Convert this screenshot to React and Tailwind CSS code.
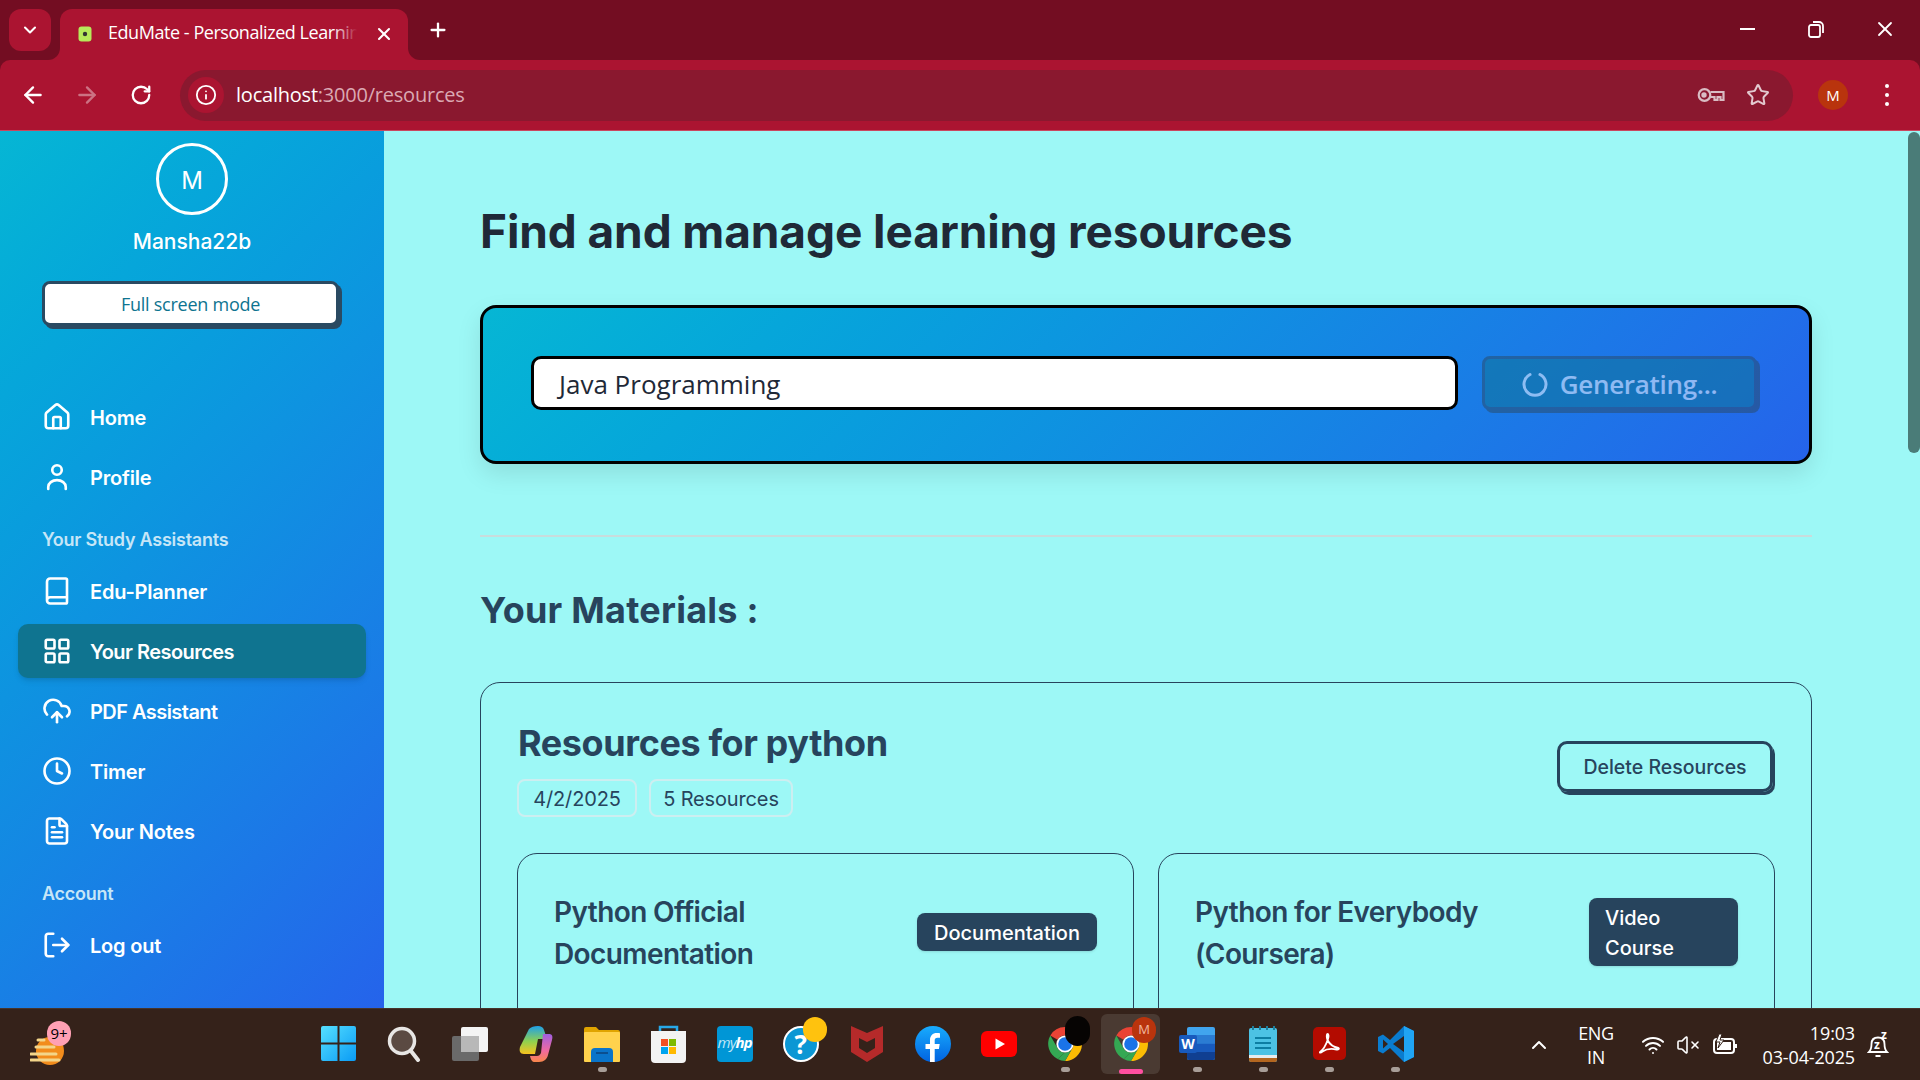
import React from 'react';
import { ChevronDown, X, Plus, ArrowLeft, ArrowRight, RotateCw, Info, Star, House, Book, LayoutGrid, CloudUpload, Clock, FileText, LogOut, ChevronUp, Wifi, VolumeX } from 'lucide-react';

function ProfileIcon({ size, strokeWidth, className }) {
  return (
    <svg width={size} height={size} viewBox="0 0 24 24" fill="none" stroke="currentColor" strokeWidth={strokeWidth} strokeLinecap="round" strokeLinejoin="round" className={className}>
      <circle cx="12" cy="6.400" r="3.800" />
      <path d="M5 21.500V20a7 5.500 0 0 1 14 0v1.500" />
    </svg>
  );
}

function Chrome() {
  return (
    <div className="flex h-[60px] items-end bg-[#730d22] pl-[9px] text-white">
      <div className="mb-[9px] flex h-[42px] w-[42px] items-center justify-center rounded-xl bg-[#ab1431]"><ChevronDown size={20} strokeWidth={2.5} /></div>
      <div className="relative ml-[9px] flex h-[51px] w-[348px] items-center rounded-t-xl bg-[#ab1431] pl-[18px]">
        <div className="absolute bottom-0 right-full h-3 w-3 bg-[#ab1431]"><div className="h-full w-full rounded-br-xl bg-[#730d22]" /></div>
        <div className="absolute bottom-0 left-full h-3 w-3 bg-[#ab1431]"><div className="h-full w-full rounded-bl-xl bg-[#730d22]" /></div>
        <svg width="14" height="16" viewBox="0 0 14 16" className="mb-[1px] shrink-0"><rect x="0.5" y="0.5" width="13" height="15" rx="3" fill="#b6ea5a" /><circle cx="7" cy="8" r="2.200" fill="#333" /></svg>
        <div className="relative mb-[5px] ml-[16px] w-[249px] overflow-hidden whitespace-nowrap font-['Open_Sans',sans-serif] text-[18px] tracking-[-0.45px]">EduMate - Personalized Learning
          <div className="absolute inset-y-0 right-0 w-6 bg-linear-to-r from-transparent to-[#ab1431]" />
        </div>
        <X size={20} strokeWidth={2.5} className="mb-[1px] ml-[17px]" />
      </div>
      <Plus size={22} strokeWidth={2.5} className="mb-[19px] ml-[19px]" />
      <div className="flex-1" />
      <div className="mb-[19px] flex items-center pr-[23px]">
        <div className="h-[2px] w-[15px] bg-white" />
        <svg width="22" height="22" viewBox="0 0 22 22" fill="none" stroke="white" strokeWidth="1.800" className="ml-[50px]"><rect x="4" y="7" width="11" height="12" rx="2" /><path d="M8 4h6a4 4 0 0 1 4 4v7" /></svg>
        <X size={24} strokeWidth={1.8} className="ml-[46px]" />
      </div>
    </div>
  );
}

function Toolbar() {
  return (
    <div className="bg-[#730d22]">
      <div className="flex h-[71px] items-center rounded-t-[10px] border-b border-[#c9485f] bg-[#ab1431] text-white">
        <ArrowLeft size={26} strokeWidth={2.2} className="ml-[20px]" />
        <ArrowRight size={26} strokeWidth={2.2} className="ml-[28px] opacity-40" />
        <RotateCw size={22} strokeWidth={2.5} className="ml-[30px]" />
        <div className="ml-[28px] flex h-[51px] w-[1613px] items-center rounded-full bg-[#8a182f] pl-[8px]">
          <div className="flex h-[36px] w-[36px] items-center justify-center rounded-full bg-[#ab1431]"><Info size={22} strokeWidth={2} /></div>
          <div className="ml-[12px] font-['Open_Sans',sans-serif] text-[20px] tracking-[-0.22px]">localhost<span className="text-[#dba9b3]">:3000/resources</span></div>
          <div className="flex-1" />
          <svg width="28" height="18" viewBox="0 0 28 18" fill="none" stroke="#d9bcc3" strokeWidth="2.200"><circle cx="7.500" cy="9" r="5.800" /><circle cx="7" cy="9" r="1.600" fill="#d9bcc3" /><path d="M13.500 6h13v8h-3v-3h-3v3h-3v-3h-4" /></svg>
          <Star size={24} strokeWidth={2} className="ml-[21px] mr-[23px] text-[#e3c9cf]" />
        </div>
        <div className="ml-[25px] flex h-[30px] w-[30px] items-center justify-center rounded-full bg-[#b9340d] font-['Open_Sans',sans-serif] text-[15px]">M</div>
        <div className="ml-[37px] flex flex-col gap-[5px]">
          <div className="h-1 w-1 rounded-full bg-white" />
          <div className="h-1 w-1 rounded-full bg-white" />
          <div className="h-1 w-1 rounded-full bg-white" />
        </div>
      </div>
    </div>
  );
}

function NavItem({ Icon, label, active, tight }) {
  return (
    <div className={active
      ? "flex h-[54px] items-center gap-[18px] rounded-[10px] bg-[#0f7490] pl-6 shadow-md"
      : "flex h-[54px] items-center gap-[18px] rounded-[10px] pl-6"}>
      <Icon size={30} strokeWidth={2.1} className="shrink-0" />
      <span className={tight ? "pt-[2px] text-[20px] font-semibold tracking-[-0.55px]" : "pt-[2px] text-[20px] font-semibold tracking-[-0.2px]"}>{label}</span>
    </div>
  );
}

function SectionLabel({ children }) {
  return <div className="flex h-[60px] items-center pl-6 pt-[10px] text-[18px] font-semibold tracking-[-0.25px] text-[#c6e6f7]">{children}</div>;
}

function Sidebar() {
  return (
    <aside className="flex w-[384px] shrink-0 flex-col overflow-hidden bg-linear-135 from-[#06b6d4] to-[#2563eb] px-[18px] pt-[12px] font-[Inter,sans-serif] text-white">
      <div className="flex flex-col items-center">
        <div className="flex h-[72px] w-[72px] items-center justify-center rounded-full border-[3px] border-white pt-[3px] text-[24px]">M</div>
        <div className="mt-3 pt-[1px] text-[21px] font-medium leading-7">Mansha22b</div>
      </div>
      <div className="ml-6 mt-[25px] flex h-[45px] w-[297px] items-center justify-center rounded-lg border-[3px] border-[#2a4a62] bg-white pt-[1px] font-['Open_Sans',sans-serif] text-[18px] font-medium tracking-[-0.25px] text-[#0e7490] shadow-[3px_3px_0_#2a4a62]">Full screen mode</div>
      <nav className="mt-[64px] flex flex-col">
        <div className="flex flex-col gap-[6px]">
          <NavItem Icon={House} label="Home" />
          <NavItem Icon={ProfileIcon} label="Profile" />
        </div>
        <SectionLabel>Your Study Assistants</SectionLabel>
        <div className="flex flex-col gap-[6px]">
          <NavItem Icon={Book} label="Edu-Planner" />
          <NavItem Icon={LayoutGrid} label="Your Resources" active tight />
          <NavItem Icon={CloudUpload} label="PDF Assistant" tight />
          <NavItem Icon={Clock} label="Timer" />
          <NavItem Icon={FileText} label="Your Notes" />
        </div>
        <SectionLabel>Account</SectionLabel>
        <NavItem Icon={LogOut} label="Log out" />
      </nav>
    </aside>
  );
}

function ResourceCard({ title, type, badgeClass }) {
  return (
    <div className="rounded-[20px] border border-[#27445d] p-9 pb-[60px]">
      <div className="flex items-center justify-between">
        <div className="max-w-[300px] pt-px text-[28px] font-semibold leading-[42px] tracking-[-0.6px]">{title}</div>
        <div className={badgeClass}>{type}</div>
      </div>
    </div>
  );
}

function Main() {
  return (
    <main className="min-w-0 flex-1 overflow-hidden pl-24 pr-[96px] font-[Inter,sans-serif]">
      <h1 className="mt-[67px] h-[66px] text-[46px] font-bold leading-[66px] tracking-[-0.1px] text-[#1f2937]">Find and manage learning resources</h1>
      <div className="mt-[41px] flex h-[159px] gap-6 rounded-2xl border-[3px] border-black bg-linear-135 from-[#06b6d4] to-[#2563eb] p-12 pr-[52px] shadow-[0_10px_24px_rgba(0,0,0,0.1)]">
        <div className="flex h-[54px] flex-1 items-center rounded-[10px] border-[3px] border-black bg-white pl-[25px] pt-[2px] font-['Open_Sans',sans-serif] text-[26px] text-[#1f2937]">Java Programming</div>
        <div className="flex h-[54px] w-[275px] items-center justify-center gap-[12px] rounded-lg border-[3px] border-[#2a4a62] bg-[#0e7490] pt-[2px] font-['Open_Sans',sans-serif] text-[26px] font-semibold tracking-[-0.3px] text-white opacity-50 shadow-[3px_3px_0_#2a4a62]">
          <svg width="26" height="26" viewBox="0 0 26 26" fill="none" stroke="white" strokeWidth="3" strokeLinecap="round"><path d="M18 3.500a11 11 0 1 1-10 0" /></svg>
          Generating...
        </div>
      </div>
      <div className="mt-[71px] h-[2px] bg-[#c9dcdc]" />
      <h2 className="mb-[45px] mt-[46px] h-[54px] text-[36px] font-bold leading-[54px] tracking-[0.25px] text-[#27445d]">Your Materials :</h2>
      <section className="rounded-[20px] border border-[#27445d] p-9 text-[#27445d]">
        <div className="flex items-start justify-between">
          <div>
            <div className="pl-[1px] text-[36px] font-bold leading-[48px] tracking-[-0.4px]">Resources for python</div>
            <div className="mt-3 flex gap-3 text-[20px] tracking-[-0.15px]">
              <div className="flex h-[38px] w-[120px] items-center justify-center rounded-lg border-2 border-[#cdeef0] pt-[2px]">4/2/2025</div>
              <div className="flex h-[38px] w-[144px] items-center justify-center rounded-lg border-2 border-[#cdeef0] pt-[2px]">5 Resources</div>
            </div>
          </div>
          <div className="mr-[2px] mt-[22px] flex h-[51px] w-[216px] items-center justify-center rounded-[10px] border-[3px] border-[#27445d] pt-[2px] text-[19.5px] font-medium shadow-[2px_3px_0_#27445d]">Delete Resources</div>
        </div>
        <div className="mt-9 grid grid-cols-2 gap-6">
          <ResourceCard title="Python Official Documentation" type="Documentation" badgeClass="-mt-px flex h-[38px] w-[180px] items-center justify-center rounded-lg bg-[#27445d] pt-px text-[20px] font-medium leading-[30px] text-white shadow" />
          <ResourceCard title="Python for Everybody (Coursera)" type="Video Course" badgeClass="-mt-px w-[149px] rounded-lg bg-[#27445d] px-4 pb-[3px] pt-[5px] text-[20px] font-medium leading-[30px] text-white shadow" />
        </div>
      </section>
    </main>
  );
}

function ChromeIcon({ size = 36 }) {
  return (
    <svg width={size} height={size} viewBox="0 0 36 36">
      <path d="M18 1a17 17 0 0 1 14.700 8.500H18a8.500 8.500 0 0 0-7.400 4.300L3.300 9.500A17 17 0 0 1 18 1z" fill="#ea4335" />
      <path d="M3.300 9.500l7.300 12.700A8.500 8.500 0 0 0 18 26.500L10.600 33A17 17 0 0 1 3.300 9.500z" fill="#34a853" />
      <path d="M32.700 9.500A17 17 0 0 1 18 35l7.400-12.800A8.500 8.500 0 0 0 18 9.500z" fill="#fbbc04" />
      <path d="M10.600 33L18 26.500a8.500 8.500 0 0 0 7.400-4.300L18 35a17 17 0 0 1-7.400-2z" fill="#34a853" />
      <circle cx="18" cy="18" r="8.600" fill="white" />
      <circle cx="18" cy="18" r="6.800" fill="#1a73e8" />
    </svg>
  );
}

const Dot = () => <div className="absolute bottom-[8px] h-[5px] w-[9px] rounded-full bg-[#a89e98]" />;

function TaskIcon({ children, dot }) {
  return (
    <div className="relative flex h-full w-[66.1px] shrink-0 items-center justify-center pb-[2px]">
      {children}
      {dot && <Dot />}
    </div>
  );
}

function Taskbar() {
  return (
    <footer className="relative flex h-[72px] shrink-0 items-center border-t border-[#46342b] bg-[#35221a] font-['Open_Sans',sans-serif] text-white">
      <div className="relative ml-[30px] h-[44px] w-[44px]">
        <svg width="38" height="40" viewBox="0 0 38 40" className="absolute top-[4px]">
          <circle cx="20" cy="24" r="14" fill="#f28c1c" />
          <g stroke="#f3d58a" strokeWidth="3" strokeLinecap="round">
            <path d="M8 13h6M6 20h18M1 27h25M1 33h28" />
          </g>
        </svg>
        <div className="absolute left-[17px] top-[-2px] flex h-[25px] w-[24px] items-center justify-center rounded-full bg-[#ffa0b4] text-[15px] text-black">9+</div>
      </div>
      <div className="ml-[231px] flex h-full items-center">
        <TaskIcon>
          <svg width="35" height="35" viewBox="0 0 35 35">
            <defs><linearGradient id="w" x1="0" y1="0" x2="1" y2="1"><stop offset="0" stopColor="#56e0ff" /><stop offset="1" stopColor="#0a9bf5" /></linearGradient></defs>
            <path d="M0 2a2 2 0 0 1 2-2h14.500v16.500H0zM18.500 0H33a2 2 0 0 1 2 2v14.500H18.500zM0 18.500h16.500V35H2a2 2 0 0 1-2-2zM18.500 18.500H35V33a2 2 0 0 1-2 2H18.500z" fill="url(#w)" />
          </svg>
        </TaskIcon>
        <TaskIcon>
          <svg width="34" height="36" viewBox="0 0 34 36" fill="none"><circle cx="15" cy="15" r="12.500" fill="#5b4a42" stroke="#e8e6e4" strokeWidth="3.500" /><path d="M24 25l7 9" stroke="#e8e6e4" strokeWidth="4" strokeLinecap="round" /></svg>
        </TaskIcon>
        <TaskIcon>
          <svg width="36" height="34" viewBox="0 0 36 34"><rect x="0" y="9" width="27" height="25" rx="2" fill="#6a6a6a" /><rect x="9" y="0" width="27" height="25" rx="2" fill="#f4f4f4" /><rect x="9" y="9" width="18" height="16" fill="#b8b8b8" /></svg>
        </TaskIcon>
        <TaskIcon>
          <svg width="34" height="36" viewBox="0 0 34 36">
            <defs>
              <linearGradient id="c1" x1="0" y1="0" x2="0" y2="1"><stop offset="0" stopColor="#1fa0e8" /><stop offset="0.55" stopColor="#8fd14f" /><stop offset="1" stopColor="#f7c31f" /></linearGradient>
              <linearGradient id="c2" x1="0" y1="0" x2="0" y2="1"><stop offset="0" stopColor="#a05fe0" /><stop offset="0.6" stopColor="#f06aa0" /><stop offset="1" stopColor="#f9874a" /></linearGradient>
            </defs>
            <path d="M10 3c2-2 5-3 9-3 3 0 5 1 6 4l3 9h-9L16 28H5C1 28 0 25 1 21z" fill="url(#c1)" />
            <path d="M24 8h6c3 0 4 2 3 6l-4 15c-1 4-4 7-9 7h-4c-3 0-4-2-5-6h7c2 0 3-1 4-3z" fill="url(#c2)" />
          </svg>
        </TaskIcon>
        <TaskIcon dot>
          <svg width="36" height="36" viewBox="0 0 36 36">
            <path d="M0 3a2 2 0 0 1 2-2h10l3 3h19a2 2 0 0 1 2 2v4H0z" fill="#e0a400" />
            <rect x="0" y="6" width="36" height="30" rx="1" fill="#ffd24d" />
            <path d="M7 36V26a4 4 0 0 1 4-4h14a4 4 0 0 1 4 4v10z" fill="#0a74c9" />
            <rect x="12" y="26" width="12" height="2" fill="#0b4f8f" />
          </svg>
        </TaskIcon>
        <TaskIcon>
          <svg width="35" height="38" viewBox="0 0 35 38">
            <path d="M9 9V2h17v7" fill="none" stroke="#27a8e8" strokeWidth="2.500" />
            <path d="M0 6h35v28a4 4 0 0 1-4 4H4a4 4 0 0 1-4-4z" fill="#f3f3f3" />
            <rect x="10" y="14" width="7" height="7" fill="#f25022" /><rect x="18" y="14" width="7" height="7" fill="#7fba00" />
            <rect x="10" y="22" width="7" height="7" fill="#00a4ef" /><rect x="18" y="22" width="7" height="7" fill="#ffb900" />
          </svg>
        </TaskIcon>
        <TaskIcon>
          <div className="flex h-[36px] w-[36px] items-center justify-center rounded-sm bg-[#0096d6] pb-[2px] text-[15px] italic tracking-[-1px] text-[#bfe6f7]">my<span className="font-bold text-white">hp</span></div>
        </TaskIcon>
        <TaskIcon>
          <div className="relative">
            <div className="flex h-[36px] w-[36px] items-center justify-center rounded-full border-2 border-white bg-[#0b97d4] text-[26px] font-bold leading-none">?</div>
            <div className="absolute left-[20px] top-[-9px] h-[25px] w-[24px] rounded-full bg-[#ffc20e]" />
          </div>
        </TaskIcon>
        <TaskIcon>
          <svg width="32" height="36" viewBox="0 0 32 36" fill="#b52a2a"><path d="M0 0l16 7 16-7v26L16 36 0 26z" /><path d="M8 12l8 4 8-4v10l-8 5-8-5z" fill="#35221a" /></svg>
        </TaskIcon>
        <TaskIcon>
          <svg width="36" height="36" viewBox="0 0 36 36">
            <defs><linearGradient id="fb" x1="0" y1="0" x2="0" y2="1"><stop offset="0" stopColor="#18acfe" /><stop offset="1" stopColor="#0163e0" /></linearGradient></defs>
            <circle cx="18" cy="18" r="18" fill="url(#fb)" />
            <path d="M15 36V23h-4.500v-5H15v-3.800C15 9.700 17.700 7 21.700 7c1.500 0 3 .2 3.300.3v4.500h-2.500c-2 0-2.800 1-2.800 2.700V18h5l-.8 5H19.700v13z" fill="white" />
          </svg>
        </TaskIcon>
        <TaskIcon>
          <svg width="36" height="26" viewBox="0 0 36 26"><rect width="36" height="26" rx="6" fill="#ff0000" /><path d="M14.500 7.500l9.500 5.500-9.500 5.500z" fill="white" /></svg>
        </TaskIcon>
        <TaskIcon dot>
          <div className="relative">
            <ChromeIcon />
            <div className="absolute left-[18px] top-[-10px] h-[30px] w-[25px] rounded-full bg-[#060403]" />
          </div>
        </TaskIcon>
        <TaskIcon>
          <div className="absolute left-[3px] top-[5px] h-[60px] w-[59px] rounded-md bg-[#4a3a32]" />
          <div className="relative">
            <ChromeIcon />
            <div className="absolute left-[19px] top-[-9px] flex h-[26px] w-[24px] items-center justify-center rounded-full bg-[#b9340d] text-[13px] text-[#f2b8a0]">M</div>
          </div>
          <div className="absolute bottom-[6px] h-[5px] w-[24px] rounded-full bg-[#ff4fa0]" />
        </TaskIcon>
        <TaskIcon dot>
          <svg width="36" height="34" viewBox="0 0 36 34">
            <rect x="8" y="0" width="28" height="33" rx="2" fill="#41a5ee" /><rect x="8" y="8" width="28" height="8.500" fill="#2b7cd3" /><rect x="8" y="16.500" width="28" height="8.500" fill="#185abd" /><path d="M8 25h28v6a2 2 0 0 1-2 2H10a2 2 0 0 1-2-2z" fill="#103f91" />
            <rect x="0" y="8" width="18" height="18" rx="2" fill="#185abd" />
            <text x="9" y="22" textAnchor="middle" fontSize="14" fontWeight="700" fill="white" fontFamily="Open Sans">W</text>
          </svg>
        </TaskIcon>
        <TaskIcon dot>
          <svg width="28" height="36" viewBox="0 0 28 36">
            <rect x="0" y="2" width="28" height="34" rx="2" fill="#4cc2e4" /><rect x="0" y="29" width="28" height="3" fill="#e7ecee" /><path d="M0 32h28v2a2 2 0 0 1-2 2H2a2 2 0 0 1-2-2z" fill="#b4661f" />
            <path d="M6 12h16M6 17h16M6 22h16" stroke="#0d7ea3" strokeWidth="2" />
            <path d="M4 0v4M11 0v4M18 0v4M25 0v4" stroke="#1d7f9c" strokeWidth="2" />
          </svg>
        </TaskIcon>
        <TaskIcon dot>
          <svg width="33" height="33" viewBox="0 0 33 33">
            <rect width="33" height="33" rx="5" fill="#b30b00" />
            <path d="M7 25c3-2 6-7 8-13 1-3 .5-5-.5-5s-1 3 0 6c2 4 5 7 11 8 1 .5 0 2-2 1.500-5-1-11 0-14 2-2 1.500-3 1.500-2.500.5z" fill="none" stroke="white" strokeWidth="1.800" />
          </svg>
        </TaskIcon>
        <TaskIcon dot>
          <svg width="36" height="36" viewBox="0 0 36 36">
            <path d="M26 0l10 5v26l-10 5-14-14-7 5.500-5-2.500v-14l5-2.500 7 5.500z" fill="#0a7ccf" />
            <path d="M26 0l10 5v26l-10 5z" fill="#20a4f3" />
            <path d="M26 10v16l-11-8z" fill="#35221a" />
            <path d="M5 13.500l5 4.500-5 4.500z" fill="#35221a" />
          </svg>
        </TaskIcon>
      </div>
      <div className="flex-1" />
      <ChevronUp size={24} strokeWidth={2} className="mr-[28px]" />
      <div className="mr-[28px] flex w-[34px] flex-col items-center text-[18px] leading-[24px] tracking-[-0.3px]"><span>ENG</span><span>IN</span></div>
      <Wifi size={24} strokeWidth={2} className="mr-[11px]" />
      <VolumeX size={24} strokeWidth={1.6} className="mr-[12px]" />
      <svg width="26" height="24" viewBox="0 0 26 24" fill="none" stroke="white" strokeWidth="2"><rect x="2" y="6" width="20" height="14" rx="3" /><path d="M24 11v4" /><rect x="5" y="9" width="14" height="8" fill="white" stroke="none" /><path d="M7 1L4 9h4l-2 6 6-8H8l2-6z" fill="white" stroke="#35221a" strokeWidth="1" /></svg>
      <div className="ml-[21px] flex w-[96px] flex-col items-end text-[18px] leading-[24px] tracking-[-0.15px]"><span>19:03</span><span>03-04-2025</span></div>
      <div className="relative ml-[12px] mr-[31px] h-[28px] w-[22px]">
        <svg width="22" height="28" viewBox="0 0 22 28" fill="none" stroke="white" strokeWidth="1.800"><path d="M2 21c2-2 2.500-4 2.500-8 0-4 2.500-6.500 6.500-6.500s6.500 2.500 6.500 6.500c0 4 .5 6 2.500 8zM8.500 25h5" /></svg>
        <span className="absolute left-[7px] top-[8px] text-[12px] font-bold leading-none">z</span>
        <span className="absolute left-[14px] top-[-2px] text-[12px] font-bold leading-none">z</span>
      </div>
    </footer>
  );
}

export default function App() {
  return (
    <div className="flex h-screen w-full flex-col overflow-hidden bg-[#9df8f6]">
      <Chrome />
      <Toolbar />
      <div className="flex min-h-0 flex-1">
        <Sidebar />
        <Main />
        <div className="w-3 shrink-0 pt-px">
          <div className="h-[321px] rounded-full bg-[#4a7c78]" />
        </div>
      </div>
      <Taskbar />
    </div>
  );
}
